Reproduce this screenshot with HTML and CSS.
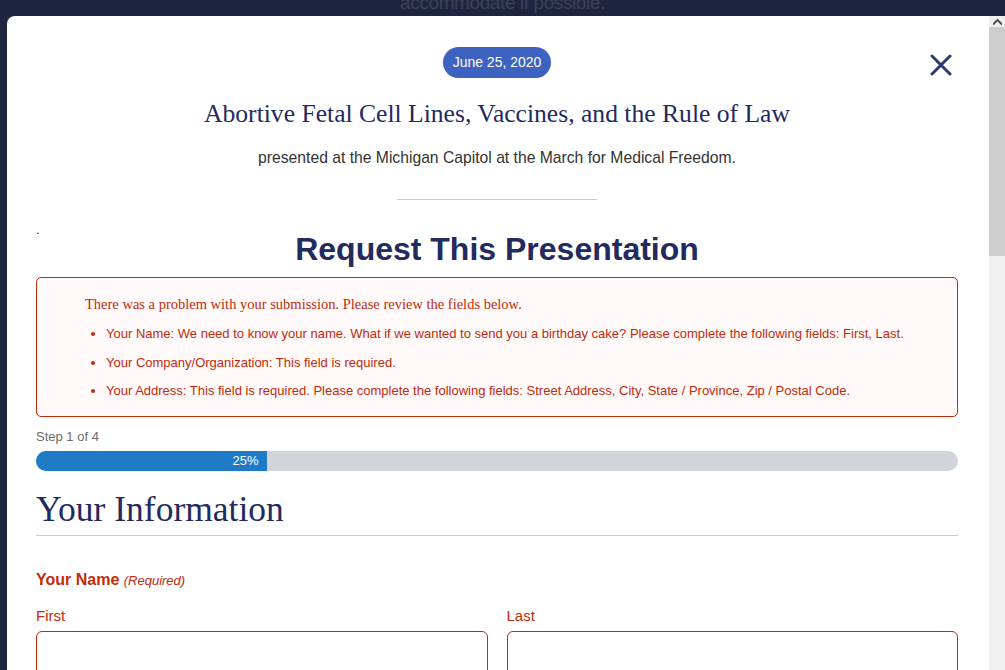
FILE: index.html
```html
<!DOCTYPE html>
<html lang="en">
  <head>
    <meta charset="UTF-8" />
    <meta name="viewport" content="width=device-width, initial-scale=1.0" />
    <title>Request This Presentation</title>
    <link rel="stylesheet" href="styles.css">
  </head>
  <body>
    <div class="page-behind">accommodate if possible.</div>

    <div class="modal">
      <div class="modal-body">
        <button class="close" aria-label="Close">
          <svg width="22" height="22" viewBox="0 0 22 22">
            <path d="M2 2 L20 20 M20 2 L2 20" stroke="#2b3b72" stroke-width="3" stroke-linecap="round" fill="none" />
          </svg>
        </button>

        <div class="intro">
          <span class="date-pill">June 25, 2020</span>
          <h3 class="talk-title">Abortive Fetal Cell Lines, Vaccines, and the Rule of Law</h3>
          <p class="talk-sub">presented at the Michigan Capitol at the March for Medical Freedom.</p>
          <div class="divider"></div>
        </div>

        <div class="dot">.</div>
        <h2 class="form-title">Request This Presentation</h2>

        <div class="error-box">
          <h4>There was a problem with your submission. Please review the fields below.</h4>
          <ul>
            <li>Your Name: We need to know your name. What if we wanted to send you a birthday cake? Please complete the following fields: First, Last.</li>
            <li>Your Company/Organization: This field is required.</li>
            <li>Your Address: This field is required. Please complete the following fields: Street Address, City, State / Province, Zip / Postal Code.</li>
          </ul>
        </div>

        <div class="step">Step 1 of 4</div>
        <div class="progress">
          <div class="progress-fill" style="width: 25%">25%</div>
        </div>

        <h3 class="section-title">Your Information</h3>

        <div class="field-label">Your Name <span class="required">(Required)</span></div>
        <div class="name-row">
          <div class="name-col">
            <label for="first">First</label>
            <input id="first" type="text" />
          </div>
          <div class="name-col">
            <label for="last">Last</label>
            <input id="last" type="text" />
          </div>
        </div>
      </div>

      <div class="scrollbar">
        <div class="scroll-up">
          <svg width="9" height="6" viewBox="0 0 9 6"><path d="M0 5.5 L4.5 1 L9 5.5" stroke="#505050" stroke-width="2" fill="none" /></svg>
        </div>
        <div class="scroll-thumb"></div>
      </div>
    </div>
  </body>
</html>
```

FILE: styles.css
```css
body {
  margin: 0;
  height: 670px;
  overflow: hidden;
  background-color: #1f2540;
  font-family: "Liberation Sans", Arial, sans-serif;
}

.page-behind {
  height: 16px;
  overflow: hidden;
  text-align: center;
  color: #3c4158;
  font-size: 19px;
  line-height: 6px;
  letter-spacing: -0.4px;
}

.modal {
  display: flex;
  height: 654px;
  margin-left: 7px;
  background-color: #fff;
  border-radius: 8px 0 0 0;
  overflow: hidden;
}

.modal-body {
  flex: 1;
  position: relative;
  padding: 31px 31px 0 29px;
}

.close {
  position: absolute;
  top: 38px;
  right: 37px;
  padding: 0;
  border: none;
  background: none;
  line-height: 0;
}

.intro {
  text-align: center;
}

.date-pill {
  display: inline-block;
  padding: 7px 10px;
  background-color: #3e62c0;
  color: #fff;
  font-size: 14px;
  line-height: 17px;
  border-radius: 16px;
}

.talk-title {
  margin: 19px 0 0;
  font-family: "Liberation Serif", "Times New Roman", serif;
  font-weight: normal;
  font-size: 25.6px;
  line-height: 34px;
  color: #232a5e;
}

.talk-sub {
  margin: 17px 0 0;
  font-size: 15.7px;
  line-height: 20px;
  color: #333;
}

.divider {
  width: 200px;
  height: 1px;
  margin: 31px auto 0;
  background-color: #ccc;
}

.dot {
  margin-top: 27px;
  height: 2px;
  font-size: 13px;
  line-height: 6px;
  color: #232a5e;
}

.form-title {
  margin: 0;
  text-align: center;
  font-size: 32px;
  line-height: 40px;
  color: #232a5e;
}

.error-box {
  margin-top: 8px;
  padding: 17px 20px 16px 48px;
  background-color: #fff9f9;
  border: 1px solid #c02b0a;
  border-radius: 5px;
  color: #c02b0a;
}

.error-box h4 {
  margin: 0;
  font-family: "Liberation Serif", "Times New Roman", serif;
  font-weight: normal;
  font-size: 14.5px;
  line-height: 18px;
}

.error-box ul {
  margin: 12px 0 0;
  padding-left: 21px;
  font-size: 13px;
  line-height: 18px;
}

.error-box li {
  margin-bottom: 10.5px;
}

.error-box li:last-child {
  margin-bottom: 0;
}

.step {
  margin-top: 12px;
  font-size: 13px;
  line-height: 16px;
  color: #6b6b6b;
}

.progress {
  margin-top: 6px;
  height: 20px;
  background-color: #d1d5db;
  border-radius: 10px;
  overflow: hidden;
}

.progress-fill {
  height: 100%;
  padding-right: 8px;
  box-sizing: border-box;
  background-color: #1f7bc6;
  color: #fff;
  font-size: 13px;
  line-height: 20px;
  text-align: right;
}

.section-title {
  margin: 18px 0 0;
  padding-bottom: 6px;
  border-bottom: 1px solid #ccc;
  font-family: "Liberation Serif", "Times New Roman", serif;
  font-weight: normal;
  font-size: 35.5px;
  line-height: 40px;
  color: #232a5e;
}

.field-label {
  margin-top: 34px;
  font-size: 16px;
  font-weight: bold;
  line-height: 20px;
  color: #c02b0a;
}

.required {
  font-size: 13px;
  font-weight: normal;
  font-style: italic;
}

.name-row {
  display: flex;
  gap: 19px;
  margin-top: 16px;
}

.name-col {
  flex: 1;
}

.name-col label {
  display: block;
  font-size: 15px;
  line-height: 18px;
  color: #c02b0a;
}

.name-col input {
  display: block;
  width: 100%;
  box-sizing: border-box;
  height: 50px;
  margin-top: 6px;
  border: 1px solid #c02b0a;
  border-radius: 6px;
}

.scrollbar {
  width: 16px;
  background-color: #efefef;
}

.scroll-up {
  height: 11px;
  display: flex;
  align-items: center;
  justify-content: center;
}

.scroll-thumb {
  height: 229px;
  background-color: #cdcdcd;
}
```
